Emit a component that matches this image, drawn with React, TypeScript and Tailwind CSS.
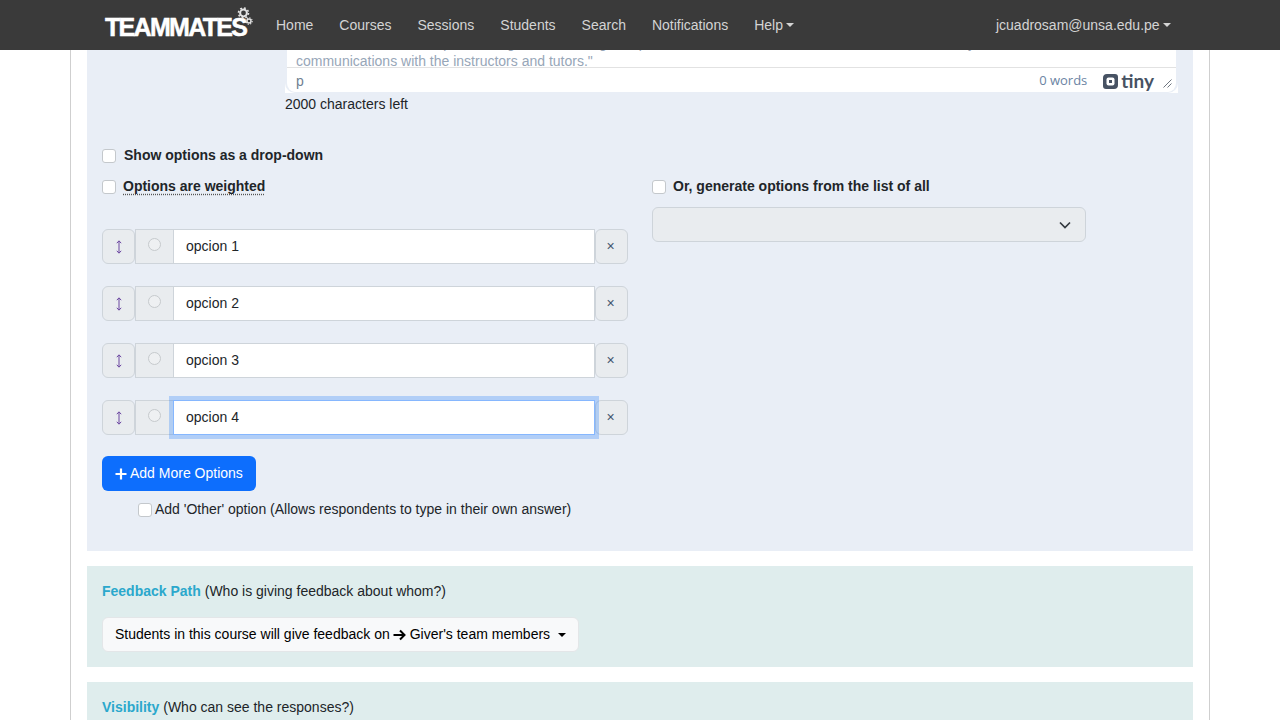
const navLinks = ['Home', 'Courses', 'Sessions', 'Students', 'Search', 'Notifications'];
const options = ['opcion 1', 'opcion 2', 'opcion 3', 'opcion 4'];

function Caret() {
  return <span className="inline-block ml-[3.4px] align-[3px] border-x-[4.2px] border-t-[4.2px] border-x-transparent border-t-current" />;
}

function Checkbox() {
  return <input type="checkbox" className="appearance-none w-[14px] h-[14px] shrink-0 bg-white border border-[#c4c8cc] rounded-[3px]" />;
}

function Logo() {
  return (
    <div className="relative w-[147px] h-[50px] shrink-0 flex items-center">
      <span className="font-bold text-[25px] text-white tracking-[-1.7px] leading-none pt-[5px] [-webkit-text-stroke:0.5px_white]">TEAMMATES</span>
      {/* gears over the last letter */}
      <svg className="absolute left-[132px] top-[6px]" width="16" height="20" viewBox="0 0 16 20" fill="none" stroke="#e4e4e4">
        <circle cx="6.5" cy="7" r="3.4" strokeWidth="2" />
        <circle cx="6.5" cy="7" r="5" strokeWidth="1.6" strokeDasharray="1.9 2" />
        <circle cx="12" cy="15" r="2" strokeWidth="1.4" />
        <circle cx="12" cy="15" r="3.2" strokeWidth="1.1" strokeDasharray="1.3 1.2" />
      </svg>
    </div>
  );
}

function Navbar() {
  return (
    <nav className="fixed top-0 inset-x-0 z-20 h-[50px] bg-[#3a3a3a] flex items-center pl-[105px] pr-[109px] text-[14px] text-[#d4d4d4]">
      <Logo />
      <div className="flex items-center gap-[26px] ml-[24px]">
        {navLinks.map(link => (
          <a key={link}>{link}</a>
        ))}
        <a>Help<Caret /></a>
      </div>
      <a className="ml-auto">jcuadrosam@unsa.edu.pe<Caret /></a>
    </nav>
  );
}

function Editor() {
  return (
    <div className="ml-[183px] bg-white">
      <div className="border-x-2 border-b border-[#e9eef6] rounded-b-[10px] h-[63px] bg-white">
        <div className="h-[37px] pt-[4px] pl-[9px] leading-[18px] text-[#97a6b8] whitespace-nowrap">
          <div>More details about the question e.g. "In answering the question, do consider communications made informally within the team, and formal</div>
          <div>communications with the instructors and tutors."</div>
        </div>
        <div className="h-[25px] border-t border-[#e2e2e2] flex items-center pl-[9px] pr-[4px] pt-[2px]">
          <span className="text-[#6f7f92]">p</span>
          <span className="ml-auto font-['Open_Sans',sans-serif] text-[13px] text-[#6b84a3]">0 words</span>
          <svg className="ml-[15px]" width="17" height="17" viewBox="0 0 17 17">
            <path d="M5 1h8a3 3 0 0 1 3 3v8a4 4 0 0 1-4 4H4a3 3 0 0 1-3-3V5a4 4 0 0 1 4-4z" fill="#475263" />
            <rect x="4.5" y="4.5" width="8" height="8" rx="2" fill="#fff" />
            <rect x="7" y="7" width="3" height="3" fill="#475263" />
          </svg>
          <span className="ml-[2px] font-['Lato',sans-serif] font-bold text-[19px] leading-none text-[#475263] pb-[2px]">tiny</span>
          <svg className="ml-[9px] mt-[4px]" width="9" height="9" viewBox="0 0 9 9" stroke="#6f7680" strokeWidth="1">
            <path d="M0.5 8.5L8.5 0.5M4.5 8.5L8.5 4.5" />
          </svg>
        </div>
      </div>
    </div>
  );
}

function OptionRow({ value, focused }: { value: string; focused?: boolean }) {
  return (
    <div className="flex h-[35px]">
      <button className="w-[33px] bg-[#e9ecef] border border-[#ced4da] rounded-[6px] flex items-center justify-center">
        <svg width="8" height="14" viewBox="0 0 8 14" fill="none" stroke="#6b46a0" strokeWidth="1">
          <path d="M4 1v12M1.8 3.2L4 0.8 6.2 3.2M1.8 10.8L4 13.2 6.2 10.8" />
        </svg>
      </button>
      <div className="w-[38px] bg-[#e9ecef] border border-[#ced4da] border-r-0 flex justify-center pt-[8px]">
        <input type="radio" className="appearance-none w-[13px] h-[13px] bg-[#eef0f2] border border-[#c6cacd] rounded-full" />
      </div>
      {focused ? (
        <input
          readOnly
          value={value}
          className="relative z-10 w-[422px] h-[35px] bg-white border border-[#86b7fe] shadow-[0_0_0_4px_rgba(13,110,253,0.25)] px-[12px] pb-[2px] text-[#212529] outline-none"
        />
      ) : (
        <input
          readOnly
          value={value}
          className="w-[422px] h-[35px] bg-white border border-[#ced4da] px-[12px] pb-[2px] text-[#212529] outline-none"
        />
      )}
      <button className="w-[33px] bg-[#e9ecef] border border-[#ced4da] rounded-[6px] text-[#41566e] text-[14px] pr-[2px]">×</button>
    </div>
  );
}

function OptionsPanel() {
  return (
    <div className="bg-[#e9eef6] px-[15px] pt-[30px] pb-[31px]">
      <Editor />
      <div className="ml-[183px] mt-px leading-[21px]">2000 characters left</div>

      <label className="flex items-center gap-[8px] mt-[30px] h-[21px] font-bold">
        <Checkbox />
        <span>Show options as a drop-down</span>
      </label>

      <div className="flex gap-[24px] mt-[10px]">
        <div className="w-[526px]">
          <label className="flex items-center gap-[7px] h-[21px] font-bold">
            <Checkbox />
            <span className="underline decoration-dotted decoration-[#555] underline-offset-[3px]">Options are weighted</span>
          </label>
          <div className="flex flex-col gap-[22px] mt-[32px]">
            {options.map((opt, i) => (
              <OptionRow key={opt} value={opt} focused={i === 3} />
            ))}
          </div>
          <button className="mt-[21px] h-[35px] w-[154px] bg-[#0d6efd] rounded-[6px] text-white flex items-center pl-[13px] gap-[3px]">
            <svg width="12" height="12" viewBox="0 0 12 12" stroke="#fff" strokeWidth="2.2">
              <path d="M6 0.5v11M0.5 6h11" />
            </svg>
            <span>Add More Options</span>
          </button>
          <label className="flex items-center gap-[3px] mt-[8px] ml-[36px] h-[21px] whitespace-nowrap">
            <Checkbox />
            <span>Add 'Other' option (Allows respondents to type in their own answer)</span>
          </label>
        </div>
        <div className="w-[434px]">
          <label className="flex items-center gap-[7px] h-[21px] font-bold">
            <Checkbox />
            <span>Or, generate options from the list of all</span>
          </label>
          <div className="mt-[10px] h-[35px] bg-[#e9ecef] border border-[#ced4da] rounded-[6px] flex items-center justify-end pr-[14px]">
            <svg width="12" height="8" viewBox="0 0 12 8" fill="none" stroke="#343a40" strokeWidth="1.7">
              <path d="M1 1.5l5 5 5-5" />
            </svg>
          </div>
        </div>
      </div>
    </div>
  );
}

function FeedbackPathPanel() {
  return (
    <div className="mt-[15px] bg-[#dfeded] p-[15px]">
      <div className="leading-[21px]">
        <span className="font-bold text-[#2ba8cc]">Feedback Path</span> (Who is giving feedback about whom?)
      </div>
      <button className="mt-[15px] h-[35px] w-[477px] bg-[#f8f9fa] border border-[#e3e6e8] rounded-[6px] flex items-center pl-[12px] text-black whitespace-nowrap">
        <span>Students in this course will give feedback on</span>
        <svg className="ml-[3px] mr-[4px]" width="13" height="12" viewBox="0 0 13 12" fill="none" stroke="#000" strokeWidth="2">
          <path d="M0.5 6h11M7 1.5L11.5 6 7 10.5" />
        </svg>
        <span>Giver's team members</span>
        <span className="inline-block ml-[8px] border-x-[4.2px] border-t-[4.2px] border-x-transparent border-t-black" />
      </button>
    </div>
  );
}

export default function App() {
  return (
    <div className="h-[720px] overflow-hidden bg-white font-['Liberation_Sans',Arial,sans-serif] text-[14px] text-[#212529]">
      <Navbar />
      <div className="w-[1140px] h-[720px] mx-auto border-x border-[#cfcfcf] px-[16px]">
        <OptionsPanel />
        <FeedbackPathPanel />
        <div className="mt-[15px] bg-[#dfeded] p-[15px] leading-[21px]">
          <span className="font-bold text-[#2ba8cc]">Visibility</span> (Who can see the responses?)
        </div>
      </div>
    </div>
  );
}
